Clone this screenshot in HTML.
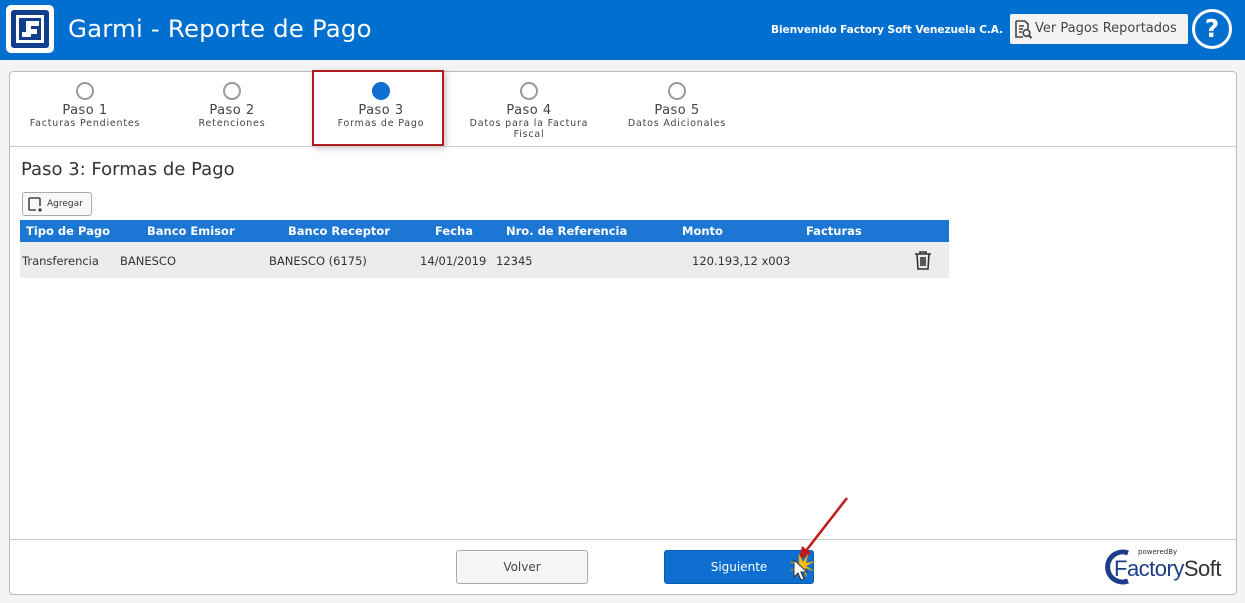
<!DOCTYPE html>
<html><head><meta charset="utf-8"><style>
*{margin:0;padding:0;box-sizing:border-box}
body{width:1245px;height:603px;background:#f3f4f6;font-family:"DejaVu Sans","Liberation Sans",sans-serif;position:relative;overflow:hidden;color:#333}
.hdr{position:absolute;left:0;top:0;width:1245px;height:60px;background:#006fcf}
.logo{position:absolute;left:6px;top:5px;width:48px;height:48px;background:#fff;border-radius:5px}
.logo .in{position:absolute;left:5px;top:5px;width:38px;height:38px;background:#123c8c;border-radius:3px}
.title{position:absolute;left:68px;top:14px;color:#fff;font-size:24.4px;letter-spacing:.2px}
.wel{position:absolute;left:771px;top:24px;color:#fff;font-size:10.6px;font-weight:bold;letter-spacing:-.1px}
.ver{position:absolute;left:1010px;top:14px;width:178px;height:30px;background:#f4f4f4;border-radius:2px;font-size:13px;color:#444;padding:7px 0 0 25px}
.help{position:absolute;left:1192px;top:9px;width:40px;height:40px;border:3px solid #fff;border-radius:50%;color:#fff;font-size:25px;font-weight:bold;text-align:center;line-height:34px}
.panel{position:absolute;left:9px;top:71px;width:1228px;height:524px;background:#fff;border:1px solid #bbb;border-radius:4px}
.step{position:absolute;top:10px;text-align:center;width:150px}
.step .c{width:18px;height:18px;border:2px solid #999;border-radius:50%;margin:0 auto}
.step .p{font-size:13px;color:#444;margin-top:3px;letter-spacing:.5px}
.step .s{font-size:9.5px;color:#444;letter-spacing:.8px;line-height:11px}
.hl{position:absolute;left:302px;top:-2px;width:132px;height:76px;border:2px solid #b01c1c;box-shadow:2px 2px 6px rgba(0,0,0,.25)}
.sep{position:absolute;left:0;top:74px;width:100%;border-top:1px solid #ccc}
h2{position:absolute;left:11px;top:87px;font-size:18px;font-weight:normal;color:#333}
.add{position:absolute;left:12px;top:120px;width:70px;height:24px;border:1px solid #aaa;border-radius:3px;background:#f8f8f8;font-size:9px;padding:6px 0 0 24px}
.th{position:absolute;left:10px;top:148px;width:929px;height:22px;background:#1c76d3;color:#fff;font-size:11.5px;font-weight:bold}
.tr{position:absolute;left:10px;top:170px;width:929px;height:36px;background:#ececec;font-size:11.5px;color:#333}
.th span,.tr span{position:absolute;top:4px}
.tr span{top:12px}
.foot{position:absolute;left:0;top:467px;width:100%;border-top:1px solid #ccc}
.btn{position:absolute;top:478px;height:34px;border-radius:3px;font-size:12px;text-align:center;line-height:32px}
</style></head><body>
<div class="hdr">
<div class="logo"><div class="in"><svg width="38" height="38" viewBox="0 0 38 38"><path d="M5 5h28v28H5z" fill="#fff"/><path d="M8 8h22v22H8z" fill="#123c8c"/><path d="M15 11h13v5H20v3h6v5h-6v3H11v-5h4z" fill="#fff"/></svg></div></div>
<div class="title">Garmi - Reporte de Pago</div>
<div class="wel">Bienvenido Factory Soft Venezuela C.A.</div>
<div class="ver"><svg style="position:absolute;left:4px;top:6px" width="18" height="19" viewBox="0 0 18 19"><path d="M2 1h9l3 3v5M2 1v16h7" fill="none" stroke="#444" stroke-width="1.6"/><path d="M5 6h5M5 9h4M5 12h3" stroke="#444" stroke-width="1.4"/><circle cx="12.5" cy="13" r="3.3" fill="none" stroke="#444" stroke-width="1.6"/><path d="M15 15.5l2.5 2.5" stroke="#444" stroke-width="2"/></svg>Ver Pagos Reportados</div>
<div class="help">?</div>
</div>
<div class="panel">
<div class="step" style="left:0"><div class="c"></div><div class="p">Paso 1</div><div class="s">Facturas Pendientes</div></div>
<div class="step" style="left:147px"><div class="c"></div><div class="p">Paso 2</div><div class="s">Retenciones</div></div>
<div class="step" style="left:296px"><div class="c" style="background:#0f6fd0;border-color:#0f6fd0"></div><div class="p">Paso 3</div><div class="s">Formas de Pago</div></div>
<div class="step" style="left:444px"><div class="c"></div><div class="p">Paso 4</div><div class="s">Datos para la Factura<br>Fiscal</div></div>
<div class="step" style="left:592px"><div class="c"></div><div class="p">Paso 5</div><div class="s">Datos Adicionales</div></div>
<div class="hl"></div>
<div class="sep"></div>
<h2>Paso 3: Formas de Pago</h2>
<div class="add"><svg style="position:absolute;left:4px;top:3px" width="17" height="17" viewBox="0 0 17 17"><path d="M9 14H3a1 1 0 0 1-1-1V3a1 1 0 0 1 1-1h9a1 1 0 0 1 1 1v7" fill="none" stroke="#444" stroke-width="1.6"/><path d="M13 12v4M11 14h4" stroke="#444" stroke-width="1.4"/></svg>Agregar</div>
<div class="th"><span style="left:6px">Tipo de Pago</span><span style="left:127px">Banco Emisor</span><span style="left:268px">Banco Receptor</span><span style="left:415px">Fecha</span><span style="left:486px">Nro. de Referencia</span><span style="left:662px">Monto</span><span style="left:786px">Facturas</span></div>
<div class="tr"><span style="left:2px">Transferencia</span><span style="left:100px">BANESCO</span><span style="left:249px">BANESCO (6175)</span><span style="left:400px">14/01/2019</span><span style="left:476px">12345</span><span style="left:672px">120.193,12 x003</span>
<svg style="position:absolute;left:894px;top:8px" width="18" height="20" viewBox="0 0 18 20"><path d="M1 4h16M6 4V2h6v2M3 4l1 15h10l1-15M7 7v9M9 7v9M11 7v9" fill="none" stroke="#333" stroke-width="1.6"/></svg></div>
<div class="foot"></div>
<div class="btn" style="left:446px;width:132px;border:1px solid #aaa;background:#f6f6f6;color:#444">Volver</div>
<div class="btn" style="left:654px;width:150px;background:#0f6fd0;color:#fff;border:1px solid #0a5cb0">Siguiente</div>
<svg style="position:absolute;left:765px;top:420px" width="80" height="100" viewBox="0 0 80 100"><path d="M72 6L30 60" stroke="#c01818" stroke-width="2.5"/><path d="M24 68l3-14 9 7z" fill="#c01818"/><path d="M24 62l4 8 5-8-2 9 9-2-9 5 8 5-9-3 2 9-5-8-4 8 1-9-9 3 8-5-8-4 9 1z" fill="#f0c020" stroke="#c09010" stroke-width=".6"/><path d="M19 68v17l4-4 3 7 3-1-3-7h6z" fill="#fff" stroke="#333" stroke-width="1"/></svg>
<div style="position:absolute;left:1092px;top:475px;width:130px;height:40px">
<svg style="position:absolute;left:0;top:2px" width="30" height="36" viewBox="0 0 30 36"><path d="M26 4A15 15 0 1 0 26 32" fill="none" stroke="#1d3c8a" stroke-width="5"/></svg>
<div style="position:absolute;left:36px;top:1px;font-size:7px;color:#333">poweredBy</div>
<div style="position:absolute;left:12px;top:9px;font-size:22px;font-family:'Liberation Sans',sans-serif;color:#1d3c8a;letter-spacing:-.5px">Factory<span style="color:#333">Soft</span></div>
</div>
</div>
</body></html>
